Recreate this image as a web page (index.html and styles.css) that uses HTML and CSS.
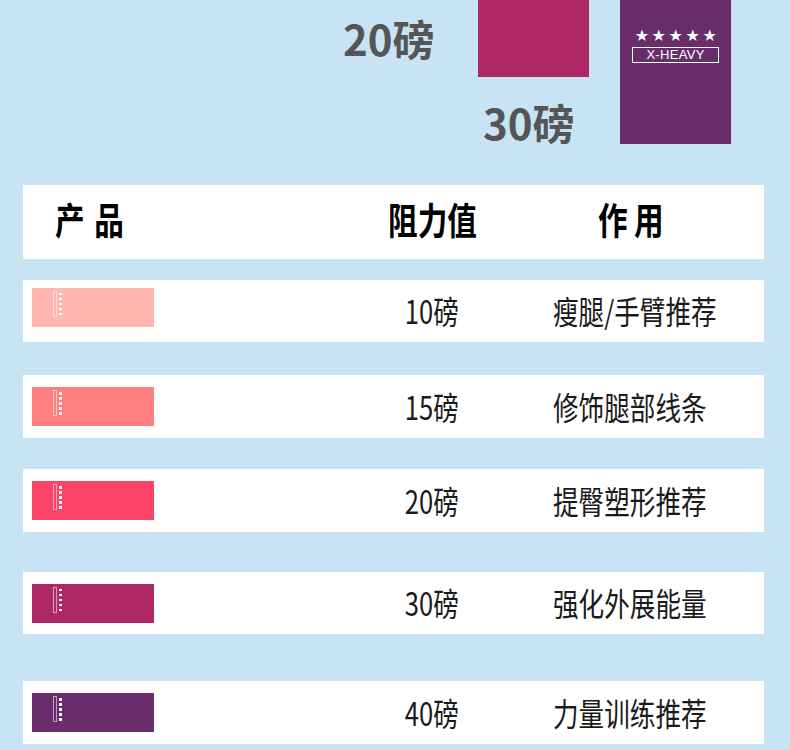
FILE: index.html
```html
<!DOCTYPE html>
<html lang="zh-CN">
<head>
<meta charset="utf-8">
<title>阻力带</title>
<link rel="stylesheet" href="styles.css">
</head>
<body>
<div class="top">
  <div class="w20">20磅</div>
  <div class="mid">
    <div class="swatch swatch-magenta"></div>
    <div class="w30">30磅</div>
  </div>
  <div class="swatch-purple">
    <div class="stars">★★★★★</div>
    <div class="xheavy">X-HEAVY</div>
  </div>
</div>

<div class="table">
  <div class="card head">
    <div class="h-prod"><span class="sq">产品</span></div>
    <div class="h-val"><span class="sq">阻力值</span></div>
    <div class="h-eff"><span class="sq">作用</span></div>
  </div>

  <div class="card row r1">
    <div class="c-prod"><div class="band band1 up"><span class="mark"></span><span class="dots"><i></i><i></i><i></i><i></i><i></i></span></div></div>
    <div class="c-val"><span class="sq">10磅</span></div>
    <div class="c-eff"><span class="sq">瘦腿/手臂推荐</span></div>
  </div>

  <div class="card row r2">
    <div class="c-prod"><div class="band band2"><span class="mark"></span><span class="dots"><i></i><i></i><i></i><i></i><i></i></span></div></div>
    <div class="c-val"><span class="sq">15磅</span></div>
    <div class="c-eff"><span class="sq">修饰腿部线条</span></div>
  </div>

  <div class="card row r3">
    <div class="c-prod"><div class="band band3"><span class="mark"></span><span class="dots"><i></i><i></i><i></i><i></i><i></i></span></div></div>
    <div class="c-val"><span class="sq">20磅</span></div>
    <div class="c-eff"><span class="sq">提臀塑形推荐</span></div>
  </div>

  <div class="card row r4">
    <div class="c-prod"><div class="band band4"><span class="mark"></span><span class="dots"><i></i><i></i><i></i><i></i><i></i></span></div></div>
    <div class="c-val"><span class="sq">30磅</span></div>
    <div class="c-eff"><span class="sq">强化外展能量</span></div>
  </div>

  <div class="card row r5">
    <div class="c-prod"><div class="band band5"><span class="mark"></span><span class="dots"><i></i><i></i><i></i><i></i><i></i></span></div></div>
    <div class="c-val"><span class="sq">40磅</span></div>
    <div class="c-eff"><span class="sq">力量训练推荐</span></div>
  </div>
</div>
</body>
</html>
```

FILE: styles.css
```css
html, body {
  margin: 0;
  padding: 0;
}
body {
  background: #c7e3f4;
  font-family: "Noto Sans CJK SC", "Noto Sans", sans-serif;
  width: 790px;
  height: 750px;
  overflow: hidden;
}

/* top product fragment */
.top {
  display: flex;
  align-items: flex-start;
  height: 185px;
  padding-left: 343px;
  box-sizing: border-box;
}
.w20 {
  width: 135px;
  font-size: 42px;
  line-height: 42px;
  font-weight: 700;
  color: #555;
  margin-top: 17px;
  white-space: nowrap;
}
.mid {
  width: 111px;
}
.swatch-magenta {
  height: 77px;
  background: #ae2865;
}
.w30 {
  font-size: 42px;
  line-height: 42px;
  font-weight: 700;
  color: #555;
  margin-top: 24px;
  padding-left: 5px;
  white-space: nowrap;
}
.swatch-purple {
  width: 111px;
  height: 144px;
  margin-left: 31px;
  background: #692d6c;
  display: flex;
  flex-direction: column;
  align-items: center;
  padding-top: 28px;
  box-sizing: border-box;
  color: #fff;
}
.stars {
  font-family: "DejaVu Sans", sans-serif;
  font-size: 16px;
  line-height: 16px;
  letter-spacing: 2.6px;
  margin-left: 3px;
}
.xheavy {
  margin-top: 3px;
  width: 87px;
  height: 16px;
  box-sizing: border-box;
  border: 1.5px solid #fff;
  font-family: "Liberation Sans", sans-serif;
  font-size: 13px;
  line-height: 13px;
  text-align: center;
  letter-spacing: 0.3px;
}

/* table */
.table {
  margin-left: 23px;
  width: 741px;
}
.card {
  background: #fff;
  display: grid;
  grid-template-columns: 309px 200px 1fr;
  align-items: center;
}
.head {
  height: 74px;
  margin-bottom: 21px;
  color: #000;
  font-weight: 700;
}
.sq {
  display: inline-block;
  transform: scaleX(0.8);
  white-space: nowrap;
}
.h-prod,
.h-val,
.h-eff {
  font-size: 37px;
  line-height: 40px;
  margin-top: -7px;
}
.h-prod {
  padding-left: 32px;
}
.h-prod .sq {
  transform-origin: left center;
  letter-spacing: 12px;
}
.h-val {
  text-align: center;
}
.h-eff {
  padding-left: 66px;
}
.h-eff .sq {
  transform-origin: left center;
  letter-spacing: 8px;
}

.row {
  height: 63px;
  color: #1a1a1a;
}
.r1 { height: 62px; margin-bottom: 33px; }
.r2 { margin-bottom: 31px; }
.r3 { margin-bottom: 40px; }
.r4 { height: 62px; margin-bottom: 47px; }

.c-prod {
  padding-left: 9px;
}
.c-val,
.c-eff {
  font-size: 32px;
  line-height: 36px;
  margin-top: -2px;
}
.c-val {
  text-align: center;
}
.c-eff {
  padding-left: 21px;
}
.c-eff .sq {
  transform-origin: left center;
}

.band {
  width: 122px;
  height: 39px;
  box-sizing: border-box;
  padding: 3px 0 0 21px;
  display: flex;
  align-items: flex-start;
}
.band.up {
  margin-bottom: 8px;
}
.band1 { background: #ffb6b1; }
.band2 { background: #ff7f7e; }
.band3 { background: #fe4369; }
.band4 { background: #ae2865; }
.band5 { background: #692d6c; }

.mark {
  width: 4px;
  height: 26px;
  box-sizing: border-box;
  border: 1px solid rgba(255, 255, 255, 0.55);
}
.dots {
  display: flex;
  flex-direction: column;
  gap: 2.6px;
  margin-left: 2px;
  margin-top: 2px;
}
.dots i {
  display: block;
  width: 2.5px;
  height: 2.5px;
  background: #fff;
}
```
